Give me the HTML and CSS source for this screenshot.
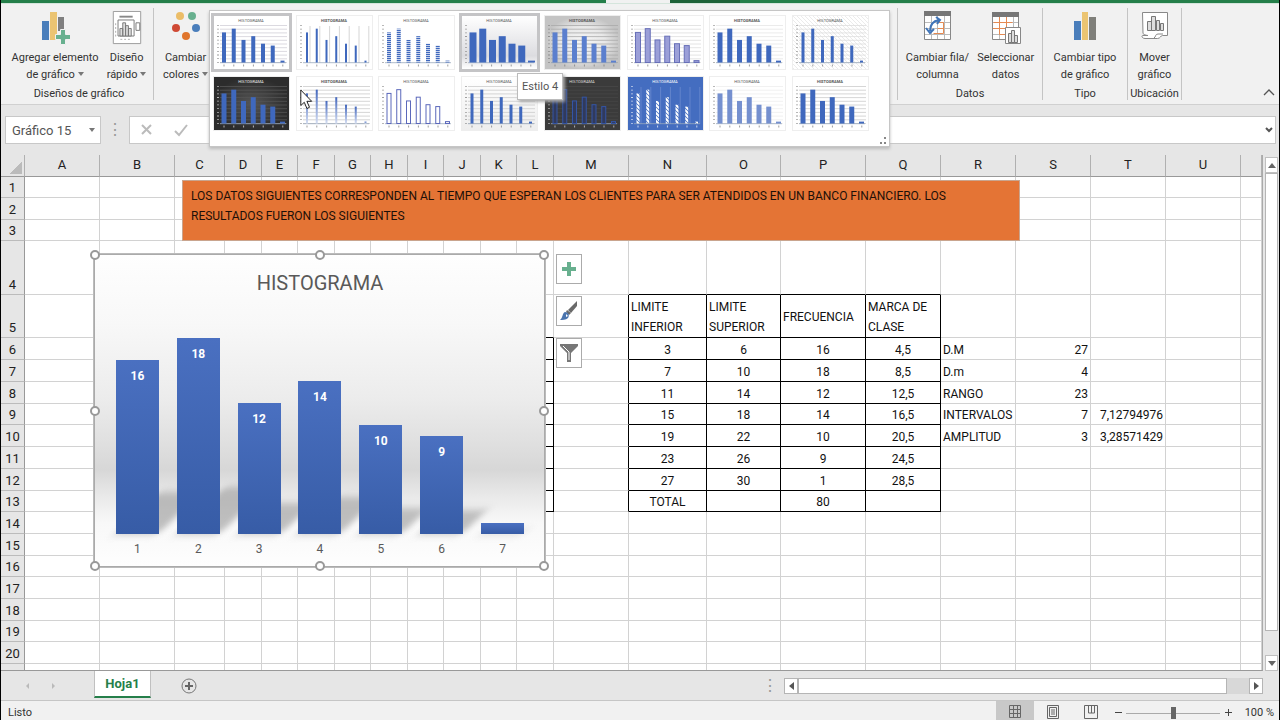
FILE: index.html
```html
<!DOCTYPE html>
<html lang="es">
<head>
<meta charset="utf-8">
<title>Histograma - Excel</title>
<link rel="stylesheet" href="styles.css">
</head>
<body>
<div class="app">
  <div class="titlebar"><span class="titlebar-tab"></span><span class="titlebar-dark"></span></div>

  <header class="ribbon">
    <section class="group group-layouts">
      <div class="group-items">
        <button class="tool" type="button">
          <svg width="30" height="34" viewBox="0 0 30 34"><path fill="#4a7ebb" d="M2 10h7v19H2z"/><path fill="#ebc472" d="M10 1h7v28h-7z"/><path fill="#7f7f7f" d="M18 6h6v14h-6z"/><path fill="#68b08f" stroke="#f1f1f1" d="M20.500 18.500h5v5h5v5h-5v5h-5v-5h-5v-5h5z"/></svg>
          <span>Agregar elemento<br>de gráfico<i class="caret"></i></span>
        </button>
        <button class="tool" type="button">
          <svg width="32" height="36" viewBox="0 0 32 36"><path fill="#fff" stroke="#999" d="M1.500 .5h29v34h-29z"/><path stroke="#888" stroke-width="2" d="M8 6h14"/><g fill="#fff" stroke="#777"><path d="M6.500 9.500h17v17h-17z"/><path fill="#ddd" d="M8.500 18.500h3v8h-3zM11.500 12.500h3v14h-3zM14.500 15.500h3v11h-3zM17.500 18.500h3v8h-3z"/><path d="M25.500 12.500h4v8h-4z"/></g><path stroke="#aaa" stroke-dasharray="2 2" d="M4 13v14M9 30h12"/></svg>
          <span>Diseño<br>rápido<i class="caret"></i></span>
        </button>
      </div>
      <h2 class="group-name">Diseños de gráfico</h2>
    </section>
    <section class="group group-styles">
      <div class="group-items">
        <button class="tool" type="button">
          <svg width="30" height="34" viewBox="0 0 30 34"><circle cx="9" cy="5" r="4" fill="#ebbd68"/><circle cx="21" cy="5" r="4" fill="#68b08f"/><circle cx="5" cy="17" r="4" fill="#cf4a35"/><circle cx="25" cy="17" r="4" fill="#4a7ebb"/><circle cx="15" cy="25" r="4" fill="#e0752c"/></svg>
          <span>Cambiar<br>colores<i class="caret"></i></span>
        </button>
      </div>
    </section>
    <section class="group group-data">
      <div class="group-items">
        <button class="tool" type="button">
          <svg width="30" height="34" viewBox="0 0 30 34"><path fill="#fff" stroke="#888" d="M2.500 1.500h26v27h-26z"/><path fill="#777" d="M2 0h27v5H2z"/><path stroke="#bbb" d="M9.500 5v23M15.500 5v23M22.500 5v23M3 11.500h25M3 17.500h25M3 23.500h25"/><path fill="none" stroke="#e58a52" d="M15.500 11.500h6v11h-10M15.500 17.500h6"/><path fill="none" stroke="#3f74b8" stroke-width="2" d="M8 20c0-7 3-10 9-11M14 6l4 3-3 4M4 17l4 5 4-4"/></svg>
          <span>Cambiar fila/<br>columna</span>
        </button>
        <button class="tool" type="button">
          <svg width="30" height="34" viewBox="0 0 30 34"><path fill="#fff" stroke="#888" d="M1.500 2.500h26v26h-26z"/><path fill="#777" d="M1 1h27v5H1z"/><path stroke="#bbb" d="M8.500 6v22M15.500 6v22M22.500 6v22M2 11.500h25M2 17.500h25M2 23.500h25"/><path fill="none" stroke="#e58a52" d="M2.500 11.500h19M8.500 6v17.500h6M2 17.500h18M15.500 6v11"/><path fill="#fff" stroke="#888" d="M14.500 16.500h15v16h-15z"/><path fill="#ddd" stroke="#777" d="M17.500 22.500h3v9h-3zM20.500 19.500h3v12h-3zM23.500 24.500h3v7h-3z"/></svg>
          <span>Seleccionar<br>datos</span>
        </button>
      </div>
      <h2 class="group-name">Datos</h2>
    </section>
    <section class="group group-type">
      <div class="group-items">
        <button class="tool" type="button">
          <svg width="30" height="34" viewBox="0 0 30 34"><path fill="#4a7ebb" d="M4 10h7v19H4z"/><path fill="#ebc472" d="M12 1h6v28h-6z"/><path fill="#7f7f7a" d="M19 6h7v23h-7z"/></svg>
          <span>Cambiar tipo<br>de gráfico</span>
        </button>
      </div>
      <h2 class="group-name">Tipo</h2>
    </section>
    <section class="group group-place">
      <div class="group-items">
        <button class="tool" type="button">
          <svg width="30" height="34" viewBox="0 0 30 34"><path fill="#fff" stroke="#888" d="M2.500 1.500h25v23h-5c-2 0-2 3-5 3H5c-3 0-4-3-2-3h5c-3 0-5-2-5-2z"/><path fill="none" stroke="#888" d="M14 27c2-1 1-4 4-4h5"/><path fill="#ddd" stroke="#777" d="M7.500 10.500h4v9h-4zM11.500 5.500h4v14h-4zM16.500 9.500h3v10h-3zM20.500 12.500h3v7h-3z"/></svg>
          <span>Mover<br>gráfico</span>
        </button>
      </div>
      <h2 class="group-name">Ubicación</h2>
    </section>
    <button class="collapse" type="button" aria-label="Contraer la cinta"><svg width="12" height="8" viewBox="0 0 12 8"><path fill="none" stroke="#555" stroke-width="1.300" d="M1 7l5-5 5 5"/></svg></button>
  </header>

  <div class="formula-row">
    <div class="namebox"><input type="text" value="Gráfico 15" aria-label="Cuadro de nombres"><i class="caret"></i></div>
    <span class="dots">⋮</span>
    <div class="formula">
      <svg width="50" height="16" viewBox="0 0 50 16"><path fill="none" stroke="#bbb" stroke-width="2" d="M4 3l9 9M13 3l-9 9M37 9l4 4 8-10"/></svg>
      <input type="text" aria-label="Barra de fórmulas">
      <svg width="10" height="8" viewBox="0 0 10 8"><path fill="none" stroke="#555" stroke-width="2" d="M2 2l3 3 3-3"/></svg>
    </div>
  </div>

  <main class="workspace">
    <div class="sheet">
      <table class="grid" id="grid"></table>
      <p class="banner">LOS DATOS SIGUIENTES CORRESPONDEN AL TIEMPO QUE ESPERAN LOS CLIENTES PARA SER ATENDIDOS EN UN BANCO FINANCIERO. LOS RESULTADOS FUERON LOS SIGUIENTES</p>
      <figure class="chart">
        <figcaption class="chart-title">HISTOGRAMA</figcaption>
        <div class="plot" id="plot"></div>
        <div class="axis" id="axis"></div>
        <i class="handle top left"></i><i class="handle top mid"></i><i class="handle top right"></i>
        <i class="handle center left"></i><i class="handle center right"></i>
        <i class="handle bottom left"></i><i class="handle bottom mid"></i><i class="handle bottom right"></i>
      </figure>
      <div class="chart-tools">
        <button type="button" aria-label="Elementos de gráfico"><svg width="16" height="16" viewBox="0 0 16 16"><path fill="#68b08f" d="M6 1h4v5h5v4h-5v5H6v-5H1V6h5z"/></svg></button>
        <button type="button" aria-label="Estilos de gráfico"><svg width="20" height="20" viewBox="0 0 20 20"><path fill="#6a6a6a" d="M18 0v5l-6 7-3-3z"/><path fill="#6a6a6a" d="M8 9l4 3-2 2-3-3z"/><path fill="#4a74ae" d="M6 11c3 0 5 3 3 6-2 2-6 2-8 2 3-2 2-7 5-8z"/><path fill="#fff" d="M7 13l2 2-2 1z"/></svg></button>
        <button type="button" aria-label="Filtros de gráfico"><svg width="18" height="20" viewBox="0 0 18 20"><path fill="#777" d="M0 1h18v2l-7 7v9H7v-9L0 3z"/><path fill="none" stroke="#fff" d="M3 3l6 6v8"/></svg></button>
      </div>
    </div>
    <div class="vscroll">
      <button type="button" aria-label="Arriba"><i class="tri up"></i></button>
      <div class="vthumb"></div>
      <button type="button" aria-label="Abajo"><i class="tri down"></i></button>
    </div>
  </main>

  <nav class="tabs">
    <div class="tab-nav"><i class="tri prev"></i><i class="tri next"></i></div>
    <button class="tab" type="button">Hoja1</button>
    <button class="add" type="button" aria-label="Hoja nueva"><svg width="16" height="16" viewBox="0 0 16 16"><circle cx="8" cy="8" r="7" fill="none" stroke="#777"/><path stroke="#666" stroke-width="2" d="M8 4v8M4 8h8"/></svg></button>
    <span class="dots tab-dots">⋮</span>
    <div class="hscroll">
      <button type="button" aria-label="Izquierda"><i class="tri prev"></i></button>
      <div class="hthumb"></div>
      <button type="button" aria-label="Derecha"><i class="tri next"></i></button>
    </div>
  </nav>

  <footer class="status">
    <span class="ready">Listo</span>
    <button class="view active" type="button" aria-label="Normal"><svg width="14" height="14" viewBox="0 0 14 14"><path fill="none" stroke="#666" d="M1.500 .5h11v12h-11zM5.500 1v12M9.500 1v12M1 4.500h12M1 8.500h12"/></svg></button>
    <button class="view" type="button" aria-label="Diseño de página"><svg width="14" height="14" viewBox="0 0 14 14"><path fill="none" stroke="#666" d="M1.500 .5h11v13h-11zM3.500 2.500h7v9h-7zM5 5h4M5 7h4M5 9h4"/></svg></button>
    <button class="view" type="button" aria-label="Salto de página"><svg width="14" height="14" viewBox="0 0 14 14"><path fill="none" stroke="#666" d="M.5 .5h13v13H.5zM4.500 1v7h6V1M7.500 1v7"/></svg></button>
    <button class="zoom-step" type="button" aria-label="Alejar"><svg width="9" height="9" viewBox="0 0 9 9"><path stroke="#444" d="M1 4.500h7"/></svg></button>
    <input class="zoom" type="range" min="0" max="100" value="50" aria-label="Zoom">
    <button class="zoom-step" type="button" aria-label="Acercar"><svg width="9" height="9" viewBox="0 0 9 9"><path stroke="#444" d="M1 4.500h7M4.500 1v7"/></svg></button>
    <span class="percent">100 %</span>
  </footer>

  <div class="gallery">
    <div class="thumbs" id="thumbs"></div>
    <svg class="grip" width="8" height="8" viewBox="0 0 8 8"><path fill="#888" d="M5 0h2v2H5zM1 5h2v2H1zM5 5h2v2H5z"/></svg>
  </div>
  <div class="tooltip" role="tooltip">Estilo 4</div>
  <svg class="cursor" width="13" height="21" viewBox="0 0 13 21"><path fill="#fff" stroke="#222" d="M.8 1v15.500l3.500-3.200 2.600 6.200 2.600-1.200-2.600-6h4.800z"/></svg>
</div>
<script src="app.js"></script>
</body>
</html>
```
FILE: styles.css
```css
* { box-sizing: border-box; }
body { margin: 0; font-family: Roboto, "Noto Sans", sans-serif; font-size: 11px; color: #333; }
button { border: 0; padding: 0; margin: 0; background: none; font: inherit; color: inherit; }
input { font: inherit; color: inherit; }
h2, p, figure { margin: 0; }
.app { position: relative; display: flex; flex-direction: column; height: 100vh; overflow: hidden; background: #e6e6e6; border-left: 1px solid #000; border-right: 1px solid #000; }

.titlebar { display: flex; flex: none; height: 4px; padding-left: 605px; background: #257f4a; border-bottom: 1px solid #d5e5dc; }
.titlebar-tab { width: 64px; background: #f1f1f1; }
.titlebar-dark { width: 70px; background: #1e6339; }

.ribbon { display: flex; flex: none; height: 101px; padding: 4px 0 4px 4px; background: #f1f1f1; border-bottom: 1px solid #d0d0d0; }
.group { display: flex; flex-direction: column; justify-content: space-between; border-right: 1px solid #c4c4c4; }
.group-items { display: flex; justify-content: center; gap: 8px; }
.group-layouts { width: 149px; }
.group-styles { flex: 1; }
.group-styles .group-items { justify-content: flex-start; padding-left: 9px; }
.group-data { width: 145px; }
.group-type { width: 85px; }
.group-place { width: 54px; }
.group-name { font-size: 11px; line-height: 12px; font-weight: 400; text-align: center; }
.tool { display: flex; flex-direction: column; align-items: center; padding-top: 3px; line-height: 17px; white-space: nowrap; }
.tool svg { height: 34px; margin-bottom: 4px; }
.caret { display: inline-block; margin-left: 3px; border: 3px solid transparent; border-top: 4px solid #777; border-bottom: 0; vertical-align: 2px; }
.collapse { width: 97px; padding: 76px 0 0 76px; }

.formula-row { display: flex; flex: none; height: 50px; padding: 11px 3px 11px 4px; }
.namebox { display: flex; align-items: center; width: 96px; padding: 0 5px 0 6px; background: #fff; border: 1px solid #c8c8c8; }
.namebox input { flex: 1; min-width: 0; border: 0; padding: 0; font-size: 13px; background: none; color: #555; }
.dots { width: 28px; font-size: 16px; line-height: 28px; text-align: center; color: #999; }
.formula { display: flex; flex: 1; align-items: center; gap: 8px; padding: 0 1px 0 8px; background: #fff; border: 1px solid #c8c8c8; }
.formula input { flex: 1; min-width: 0; border: 0; background: none; }

.workspace { display: flex; flex: 1; min-height: 0; }
.sheet { position: relative; flex: 1; min-width: 0; overflow: hidden; background: #fff; border-right: 1px solid #aaa; border-bottom: 1px solid #999; }
.grid { width: 100%; table-layout: fixed; border-collapse: separate; border-spacing: 0; font-size: 12px; line-height: 18px; color: #111; }
.grid th, .grid td { padding: 0 2px; border: 0 solid #d2d2d2; border-width: 0 1px 1px 0; overflow: hidden; white-space: nowrap; font-weight: 400; vertical-align: bottom; }
.grid th { padding: 0; background: #e6e6e6; border-color: #b0b0b0; font-size: 13px; text-align: center; color: #222; }
.grid thead th { height: 22px; padding-bottom: 2px; border-bottom-color: #999; }
.grid tbody th { border-bottom-color: #bbb; border-right-color: #999; }
.grid .left { text-align: left; }
.grid .mid { text-align: center; }
.grid .num { text-align: right; }
.grid .wrap { padding-top: 2px; white-space: normal; vertical-align: middle; line-height: 20px; }
.grid .ink-b { border-bottom-color: #000; }
.grid .ink-r { border-right-color: #000; }
.r21 { height: 21px; }
.r22 { height: 22px; }
.r43 { height: 43px; }
.r54 { height: 54px; }
.corner { display: block; margin: 5px 2px 0 auto; width: 12px; height: 12px; background: linear-gradient(135deg, transparent 50%, #bbb 50%); }

.banner { position: absolute; left: 181px; top: 25px; width: 838px; height: 61px; padding: 5px 8px; background: #e47435; border: 1px solid #c9a58f; font-size: 12px; line-height: 20px; color: #1d1008; }

.chart { position: absolute; left: 93px; top: 99px; width: 451px; height: 313px; display: flex; flex-direction: column; padding: 14px 11px 9px 12px; border: 1px solid #aaa; outline: 1px solid #bbb; background: linear-gradient(#fefefe 0, #f8f8f8 22%, #ececec 46%, #e0e0e0 60%, #d7d7d7 69%, #e8e8e8 77%, #f8f8f8 86%, #fefefe 100%); }
.chart-title { font-size: 20px; line-height: 28px; text-align: center; color: #595959; }
.plot { display: grid; grid-template-columns: repeat(7, 1fr); align-items: end; justify-items: center; flex: 1; isolation: isolate; }
.bar { position: relative; width: 43px; padding-top: 7px; background: linear-gradient(#4a70c1, #375ca6); color: #fff; font-size: 12px; line-height: 18px; font-weight: 700; text-align: center; }
.bar::before { content: ""; position: absolute; z-index: -1; left: 0; bottom: 0; width: 100%; height: 24%; background: #999; opacity: .6; filter: blur(4px); transform: skewX(-45deg); transform-origin: bottom; }
.bar.low { padding: 0; }
.axis { display: grid; grid-template-columns: repeat(7, 1fr); padding-top: 7px; font-size: 12px; line-height: 16px; text-align: center; color: #595959; }
.handle { position: absolute; width: 10px; height: 10px; margin: -5px; border: 2px solid #999; border-radius: 50%; background: #fff; }
.top { top: 0; }
.center { top: 50%; }
.bottom { top: 100%; }
.handle.left { left: 0; }
.handle.mid { left: 50%; }
.handle.right { left: 100%; }
.chart-tools { position: absolute; left: 555px; top: 99px; display: grid; gap: 12px; }
.chart-tools button { display: grid; place-items: center; width: 26px; height: 30px; background: #fff; border: 1px solid #ababab; }

.vscroll { display: flex; flex: none; flex-direction: column; justify-content: space-between; width: 16px; padding: 2px 1px 0 2px; }
.vscroll button { display: grid; place-items: center; height: 16px; background: #fff; border: 1px solid #c0c0c0; }
.vthumb { flex: 1; margin-bottom: 24px; background: #fff; border: 1px solid #b5b5b5; }
.tri { display: block; border: 4px solid transparent; }
.up { border-top: 0; border-bottom: 5px solid #666; }
.down { border-bottom: 0; border-top: 5px solid #666; }
.prev { border-left: 0; border-right: 5px solid #555; }
.next { border-right: 0; border-left: 5px solid #555; }

.tabs { display: flex; flex: none; align-items: center; height: 30px; padding-right: 16px; border-bottom: 1px solid #c6c6c6; }
.tab-nav { display: flex; gap: 23px; width: 93px; padding-left: 25px; }
.tab-nav .tri { border-width: 3px; opacity: .3; }
.tab-nav .prev { border-left: 0; }
.tab-nav .next { border-right: 0; }
.tab { align-self: flex-start; width: 57px; height: 27px; background: #fff; border: 1px solid #c0c0c0; border-width: 0 1px; border-bottom: 2px solid #257f4a; font-size: 13px; font-weight: 700; color: #257f4a; }
.add { display: grid; place-items: center; margin-left: 30px; }
.tab-dots { margin-left: auto; }
.hscroll { display: flex; width: 479px; height: 16px; background: #d8d8d8; }
.hscroll button { display: grid; place-items: center; width: 14px; background: #fff; border: 1px solid #b5b5b5; }
.hthumb { flex: 1; margin-right: 22px; background: #fff; border: 1px solid #b5b5b5; }

.status { display: flex; flex: none; align-items: flex-start; height: 19px; padding-right: 5px; background: #f1f1f1; line-height: 14px; }
.ready { flex: 1; padding: 5px 7px 0; }
.view { display: flex; justify-content: center; width: 38px; height: 19px; padding-top: 4px; }
.active { background: #c8c8c8; }
.zoom-step { display: grid; place-items: center; width: 16px; padding-top: 7px; }
.zoom { appearance: none; width: 94px; height: 12px; margin: 6px 0 0; background: linear-gradient(#aaa, #aaa) center / 100% 1px no-repeat; }
.zoom::-webkit-slider-thumb { appearance: none; width: 5px; height: 12px; background: #666; }
.percent { width: 38px; padding-top: 5px; text-align: right; white-space: nowrap; }

.gallery { position: absolute; left: 208px; top: 10px; width: 681px; height: 137px; padding: 5px 21px 0 4px; background: #fff; border: 1px solid #c6c6c6; box-shadow: 0 2px 3px #bbb; }
.thumbs { display: grid; grid-template-columns: repeat(8, 75px); justify-content: space-between; row-gap: 8px; }
.thumb { height: 53px; outline: 1px solid #eee; }
.thumb svg { display: block; }
.thumb.selected { outline: 3px solid #c4c4c6; }
.grip { position: absolute; right: 2px; bottom: 1px; }
.tooltip { position: absolute; left: 516px; top: 73px; padding: 4px; background: #fff; border: 1px solid #bbb; box-shadow: 2px 2px 3px #aaa; line-height: 17px; color: #555; }
.cursor { position: absolute; left: 299px; top: 89px; }
```
FILE: app.js
```js
const values = [16, 18, 12, 14, 10, 9, 1];

/* Worksheet */
const widths = { A: 75, B: 75, C: 50, D: 37, E: 36, F: 37, G: 36, H: 37, I: 36, J: 37, K: 36, L: 37, M: 75, N: 78, O: 74, P: 85, Q: 75, R: 75, S: 75, T: 75, U: 75, '': 0 };
const cols = Object.keys(widths);
const heights = [21, 22, 21, 54, 43, 22, 22, 22, 21, 22, 22, 22, 21, 22, 22, 21, 22, 22, 21, 22, 21];
const lower = [3, 7, 11, 15, 19, 23, 27], upper = [6, 10, 14, 18, 22, 26, 30];
const marks = ['4,5', '8,5', '12,5', '16,5', '20,5', '24,5', '28,5'];
const cells = {
  N5: ['LIMITE INFERIOR', 'left wrap'], O5: ['LIMITE SUPERIOR', 'left wrap'], P5: ['FRECUENCIA', 'left wrap'], Q5: ['MARCA DE CLASE', 'left wrap'],
  N13: ['TOTAL', 'mid'], P13: ['80', 'mid'],
  R6: ['D.M', 'left'], S6: ['27', 'num'], R7: ['D.m', 'left'], S7: ['4', 'num'],
  R8: ['RANGO', 'left'], S8: ['23', 'num'], R9: ['INTERVALOS', 'left'], S9: ['7', 'num'], T9: ['7,12794976', 'num'],
  R10: ['AMPLITUD', 'left'], S10: ['3', 'num'], T10: ['3,28571429', 'num']
};
values.forEach((v, i) => {
  cells['N' + (i + 6)] = [lower[i], 'mid'];
  cells['O' + (i + 6)] = [upper[i], 'mid'];
  cells['P' + (i + 6)] = [v, 'mid'];
  cells['Q' + (i + 6)] = [marks[i], 'mid'];
});
function ink(c, r) {
  let s = '';
  if ('NOPQ'.includes(c) && c && r >= 4 && r <= 13) s += ' ink-b';
  if ('MNOPQ'.includes(c) && c && r >= 5 && r <= 13) s += ' ink-r';
  if (c === 'L' && r >= 5 && r <= 13) s += ' ink-b';
  if (c === 'L' && r >= 6 && r <= 13) s += ' ink-r';
  return s;
}
let html = '<colgroup><col style="width:24px">' + cols.map(c => widths[c] ? `<col style="width:${widths[c]}px">` : '<col>').join('') + '</colgroup>';
html += '<thead><tr><th><i class="corner"></i></th>' + cols.map(c => `<th>${c}</th>`).join('') + '</tr></thead><tbody>';
heights.forEach((h, i) => {
  const r = i + 1;
  html += `<tr class="r${h}"><th>${r < 21 ? r : ''}</th>` + cols.map(c => {
    const [text, cls] = cells[c + r] || ['', ''];
    return `<td class="${(cls + ink(c, r)).trim()}">${text}</td>`;
  }).join('') + '</tr>';
});
document.getElementById('grid').innerHTML = html + '</tbody>';

/* Histogram */
document.getElementById('plot').innerHTML = values.map(v => `<div class="bar${v < 3 ? ' low' : ''}" style="height:${Math.round(v * 10.9)}px">${v < 3 ? '' : v}</div>`).join('');
document.getElementById('axis').innerHTML = values.map((v, i) => `<span>${i + 1}</span>`).join('');

/* Style gallery */
const styles = [
  { w: 4, lines: '#d2cfd8', sel: 1 },
  { w: 2, vert: '#bbb', bold: 1 },
  { w: 4, fill: 'url(#stripe)', x: 10 },
  { w: 7, bg: 'url(#fade)', x: 11, sel: 1 },
  { w: 5, bg: 'url(#grey)', lines: '#aaa', fill: '#5b7fce', bold: 1 },
  { w: 5, fill: '#9b9fd8', edge: '#6870b8', lines: '#ddd' },
  { w: 5, lines: '#e6e6e6', bold: 1 },
  { w: 3, lines: '#ddd', bg: 'url(#hatch)' },
  { w: 5, bg: 'url(#dark)', lines: '#555', ink: '#eee' },
  { w: 2, lines: '#ccc', fill: 'url(#low)', bold: 1 },
  { w: 4, fill: '#fff', edge: '#5b68bb', x: 10 },
  { w: 3, lines: '#ccc', bg: 'url(#pale)' },
  { w: 4, bg: '#3b3b3b', fill: '#303a5c', edge: '#3455a5', ink: '#ddd', lines: '#484848' },
  { w: 3, bg: '#446dc0', fill: 'url(#slash)', ink: '#fff', vert: '#7896d3' },
  { w: 5, lines: '#eee', fill: '#7590cf' },
  { w: 5, lines: '#ccc', bold: 1 }
];
const defs = `<svg width="0" height="0" style="position:absolute"><defs>
<linearGradient id="fade" x2="0" y2="1"><stop stop-color="#fff"/><stop offset=".75" stop-color="#dcdce0"/><stop offset="1" stop-color="#fff"/></linearGradient>
<linearGradient id="pale" x2="0" y2="1"><stop stop-color="#fff"/><stop offset="1" stop-color="#eee"/></linearGradient>
<radialGradient id="grey"><stop stop-color="#f6f6f6"/><stop offset=".6" stop-color="#e8e8e8"/><stop offset="1" stop-color="#c4c4c4"/></radialGradient>
<radialGradient id="dark"><stop stop-color="#555"/><stop offset="1" stop-color="#2c2c2c"/></radialGradient>
<linearGradient id="low" x2="0" y2="1"><stop stop-color="#4468bd"/><stop offset="1" stop-color="#d4ddf2"/></linearGradient>
<pattern id="stripe" width="4" height="2" patternUnits="userSpaceOnUse"><path fill="#3f68bd" d="M0 0h4v1.300H0z"/></pattern>
<pattern id="slash" width="4" height="4" patternUnits="userSpaceOnUse"><path stroke="#fff" stroke-width="2" d="M0 0l4 4M-2 2l4 4M2-2l4 4"/></pattern>
<pattern id="hatch" width="4" height="4" patternUnits="userSpaceOnUse"><path fill="#fff" d="M0 0h4v4H0z"/><path stroke="#ddd" stroke-width=".6" d="M0 0l4 4"/></pattern>
</defs></svg>`;
function thumb(s) {
  let g = `<rect width="75" height="53" fill="${s.bg || '#fff'}"/>`;
  if (s.lines) for (let y = 0; y < 11; y++) g += `<path stroke="${s.lines}" stroke-width=".8" d="M6 ${9.5 + y * 3.7}h67"/>`;
  if (s.vert) for (let x = 0; x < 7; x++) g += `<path stroke="${s.vert}" stroke-width=".6" d="M${13 + x * 9.8} 10v37"/>`;
  g += `<path stroke="${s.ink || '#777'}" stroke-width="2" stroke-dasharray=".8 2.900" opacity=".7" d="M4 9v38"/><path stroke="${s.ink || '#777'}" stroke-dasharray="1 8.800" stroke-width="2" opacity=".7" d="M9.500 49.500h62"/>`;
  g += '<path stroke="#9ab" stroke-width=".8" d="M6 46.700h66"/>';
  values.forEach((v, i) => {
    const h = v * 1.88;
    g += `<rect x="${(s.x || 10) + i * 9.75 - s.w / 2}" y="${46.5 - h}" width="${s.w}" height="${h}" fill="${s.fill || '#3f68bd'}" stroke="${s.edge || 'none'}"/>`;
  });
  g += `<text x="37" y="6" text-anchor="middle" font-size="4" font-weight="${s.bold ? 700 : 400}" fill="${s.ink || '#555'}">HISTOGRAMA</text>`;
  return `<div class="thumb${s.sel ? ' selected' : ''}"><svg width="75" height="53" viewBox="0 0 75 53">${g}</svg></div>`;
}
document.getElementById('thumbs').innerHTML = styles.map(thumb).join('');
document.body.insertAdjacentHTML('beforeend', defs);
```
